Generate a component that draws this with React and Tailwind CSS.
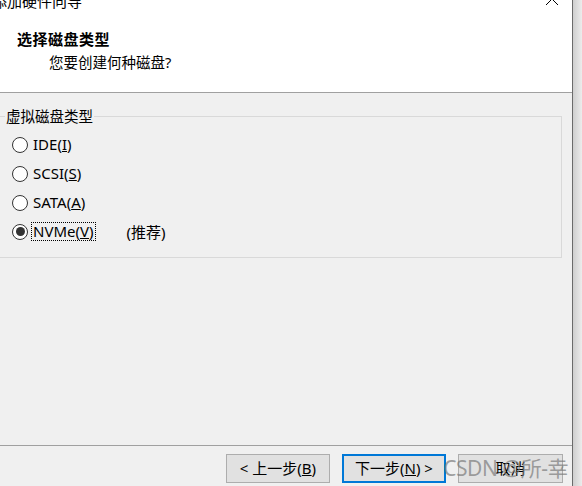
import React from 'react';

const font = { fontFamily: '"Noto Sans", "Noto Sans CJK SC", sans-serif' };

function Radio({ checked, children, focused }) {
    return (
        <div className="flex items-center h-[29px]">
            <span className="w-[16px] h-[16px] rounded-full border border-[#333333] bg-white flex items-center justify-center shrink-0">
                {checked && <span className="w-[9px] h-[9px] rounded-full bg-[#333333]" />}
            </span>
            <span
                className={
                    'ml-[3px] px-[1px] leading-[17px] border ' +
                    (focused ? 'border-dotted border-black' : 'border-transparent')
                }
            >
                {children}
            </span>
        </div>
    );
}

function Button({ children, primary, width }) {
    return (
        <button
            className={
                'h-[29px] bg-[#e1e1e1] text-[15px] text-black leading-none flex items-center justify-center ' +
                width +
                (primary ? ' border-2 border-[#0078d7]' : ' border border-[#adadad]')
            }
        >
            {children}
        </button>
    );
}

export default function App() {
    return (
        <div className="w-[582px] h-[486px] flex overflow-hidden text-black" style={font}>
            <div className="w-[572px] h-full flex flex-col bg-[#f0f0f0]">
                {/* header */}
                <div className="h-[93px] bg-white border-b border-[#a0a0a0] flex flex-col shrink-0">
                    <div className="-mt-[9px] h-[20px] flex items-center justify-between">
                        <span className="-ml-[8px] text-[15px] leading-[20px]">添加硬件向导</span>
                        <svg width="14" height="14" viewBox="0 0 14 14" className="mr-[13px] mt-[-4px]" fill="none" stroke="black" strokeWidth="1">
                            <path d="M1 1 L13 13 M13 1 L1 13" />
                        </svg>
                    </div>
                    <div className="mt-[18px] ml-[17px] text-[15px] leading-[20px] font-bold tracking-[0.5px]">
                        选择磁盘类型
                    </div>
                    <div className="mt-[3px] ml-[49px] text-[14.5px] leading-[20px]">您要创建何种磁盘?</div>
                </div>

                {/* body */}
                <div className="flex-1">
                    <fieldset className="mt-[15px] -ml-[3px] w-[565px] h-[150px] border border-[#d9d9d9]">
                        <legend className="ml-[7px] px-[1px] text-[14.5px] leading-[16px]">虚拟磁盘类型</legend>
                        <div className="text-[15px] pl-[14px] pt-[6px]">
                            <Radio>
                                IDE(<u>I</u>)
                            </Radio>
                            <Radio>
                                SCSI(<u>S</u>)
                            </Radio>
                            <Radio>
                                SATA(<u>A</u>)
                            </Radio>
                            <div className="flex items-center">
                                <Radio checked focused>
                                    NVMe(<u>V</u>)
                                </Radio>
                                <span className="ml-[31px] leading-[16px]">(推荐)</span>
                            </div>
                        </div>
                    </fieldset>
                </div>

                {/* footer */}
                <div className="relative h-[41px] border-t border-[#a0a0a0] flex justify-end gap-3 pt-[8px] pr-[9px] shrink-0">
                    <Button width="w-[104px]">
                        &lt; 上一步(<u>B</u>)
                    </Button>
                    <Button primary width="w-[104px]">
                        下一步(<u>N</u>) &gt;
                    </Button>
                    <Button width="w-[105px]">取消</Button>
                    <span className="absolute right-[4px] top-[9px] text-[21px] leading-[26px] text-[#7a7a7a]/70 tracking-[-0.5px]">
                        CSDN @所-幸
                    </span>
                </div>
            </div>
            <div className="w-px h-full bg-[#6b6b6b]" />
            <div className="flex-1 h-full bg-gradient-to-r from-[#cfcfcf] to-[#ececec]" />
        </div>
    );
}
